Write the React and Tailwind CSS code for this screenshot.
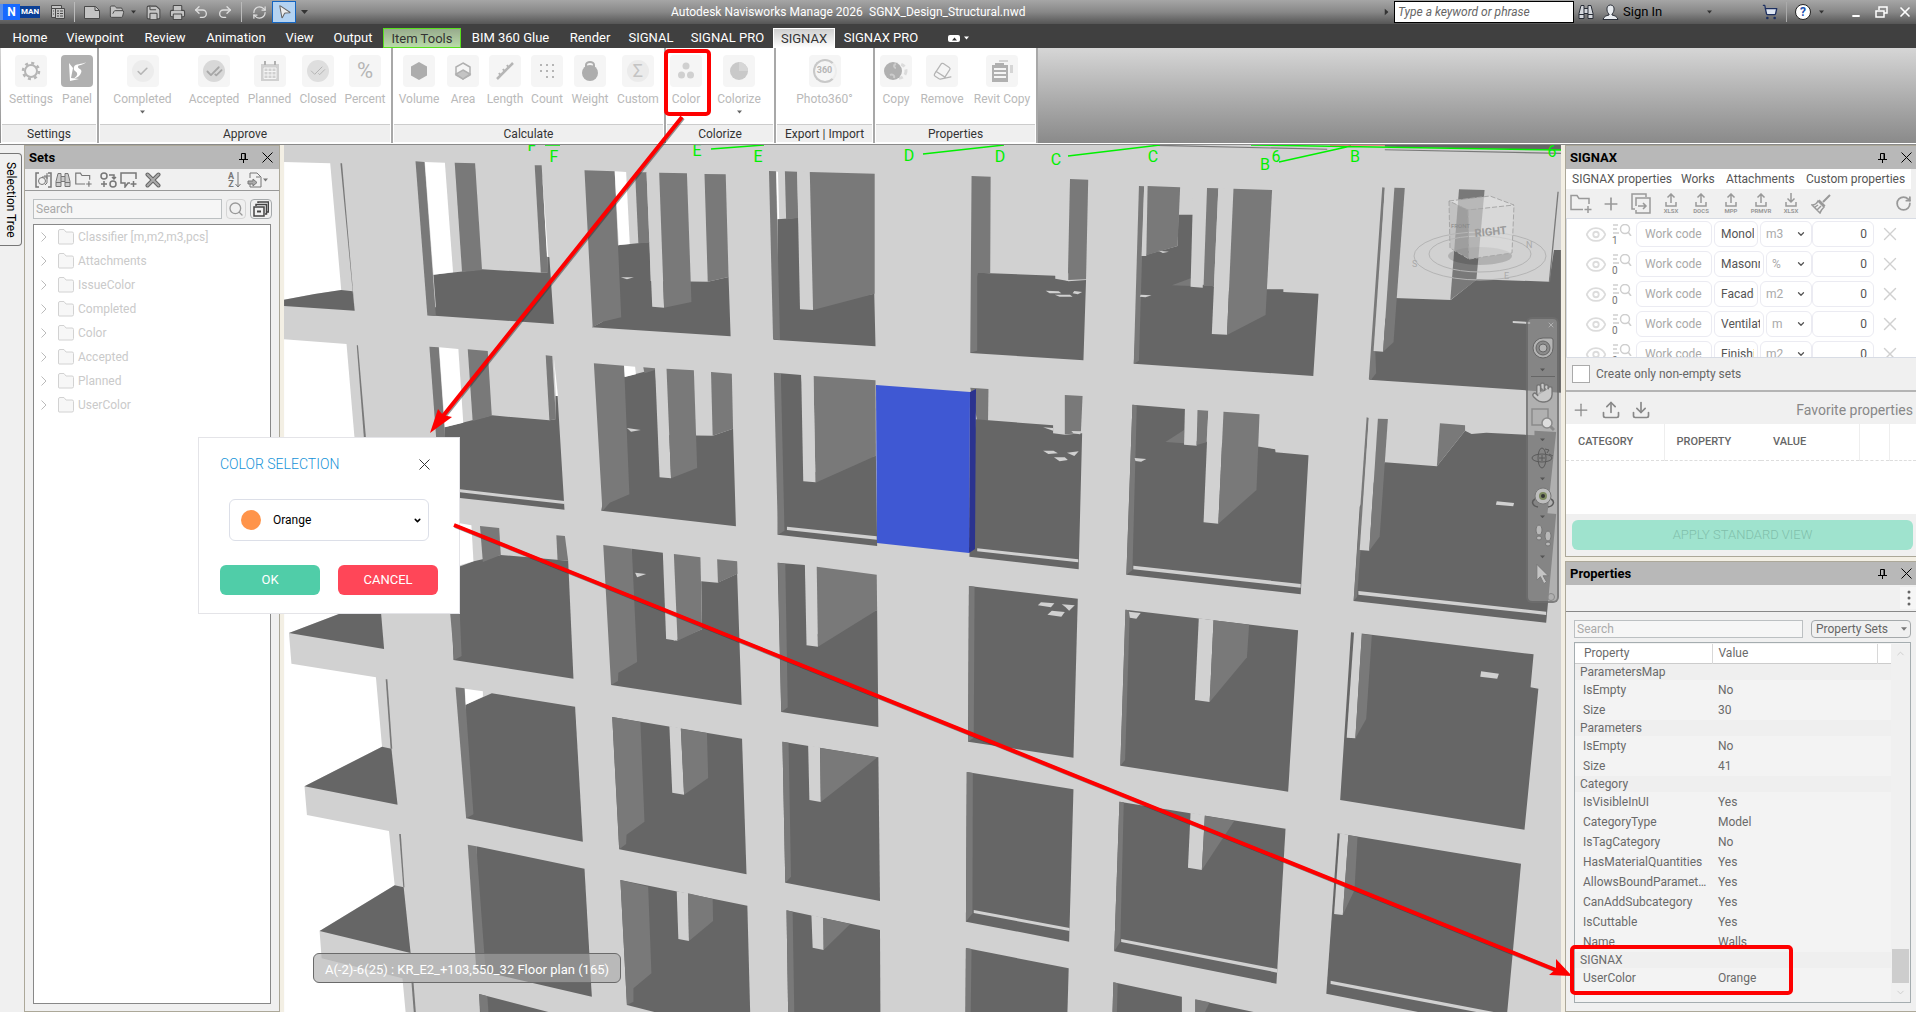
import { useState } from 'react';
import {
  Check, CheckCheck, ChevronDown, ChevronRight, ChevronUp, Download, Eraser, Eye, FolderOpen, Hand, Minus,
  MousePointer2, Plus, Printer, Redo2, RefreshCw, RotateCw, Save, Search, ShoppingCart, Undo2, Upload, X,
} from 'lucide-react';

const TABS = [
  { name: 'Home', cls: 'w-[52px]' },
  { name: 'Viewpoint', cls: 'w-[78px]' },
  { name: 'Review', cls: 'w-[62px]' },
  { name: 'Animation', cls: 'w-[80px]' },
  { name: 'View', cls: 'w-[47px]' },
  { name: 'Output', cls: 'w-[60px]' },
  { name: 'Item Tools', cls: 'w-[78px] border border-[#57e01c] bg-linear-to-b from-[#98ab8d] to-[#b9dba8] text-[#333]' },
  { name: 'BIM 360 Glue', cls: 'w-[99px]' },
  { name: 'Render', cls: 'w-[60px]' },
  { name: 'SIGNAL', cls: 'w-[62px]' },
  { name: 'SIGNAL PRO', cls: 'w-[91px]' },
  { name: 'SIGNAX', cls: 'w-[62px] border border-b-0 border-white bg-linear-to-b from-[#cfcfcf] to-white text-[#333]' },
  { name: 'SIGNAX PRO', cls: 'w-[92px]' },
];

const SETS = ['Classifier [m,m2,m3,pcs]', 'Attachments', 'IssueColor', 'Completed', 'Color', 'Accepted', 'Planned', 'UserColor'];

const WORKS = [
  { count: 1, name: 'Monolith', unit: 'm3' },
  { count: 0, name: 'Masonry', unit: '%' },
  { count: 0, name: 'Facade', unit: 'm2' },
  { count: 0, name: 'Ventilation', unit: 'm' },
  { count: 0, name: 'Finishing', unit: 'm2' },
];

const PROPERTIES = [
  { group: 'ParametersMap', rows: [['IsEmpty', 'No'], ['Size', '30']] },
  { group: 'Parameters', rows: [['IsEmpty', 'No'], ['Size', '41']] },
  {
    group: 'Category',
    rows: [
      ['IsVisibleInUI', 'Yes'], ['CategoryType', 'Model'], ['IsTagCategory', 'No'], ['HasMaterialQuantities', 'Yes'],
      ['AllowsBoundParameters', 'Yes'], ['CanAddSubcategory', 'Yes'], ['IsCuttable', 'Yes'], ['Name', 'Walls'],
    ],
  },
  { group: 'SIGNAX', rows: [['UserColor', 'Orange']] },
];

// Surface tones: w = sky, l = lit face, m = side face, d = floor
const TONES = { w: '#ffffff', l: '#d1d1d1', m: '#797979', d: '#666666' };

// The facade is drawn in four tiles, every tile on its own grid
const TILES = [
  {
    transform: 'translate(280 140) scale(0.40816 0.33333)',
    faces: [
      ['w', '10,66 123,70 150,450 85,462 10,479'],
      ['m', '148,70 152,70 183,512 178,452'],
      ['d', '10,479 85,462 150,450 178,454 183,512 10,498'],
      ['w', '10,598 163,612 183,900 10,900'],
      ['m', '188,616 191,616 211,900 206,900'],
      ['d', '376,404 495,388 640,398 655,398 655,350 660,352 671,552 361,526 382,500'],
      ['m', '332,64 354,66 382,528 361,526'],
      ['w', '355,66 404,68 424,397 376,404'],
      ['m', '428,68 478,70 495,390 446,396'],
      ['m', '624,76 641,76 657,398 639,398'],
      ['w', '642,90 657,350 654,350'],
      ['d', '829,316 905,306 908,423 1048,425 1099,411 1104,589 764,562 790,545 800,400'],
      ['m', '746,91 820,94 836,532 790,545 766,562'],
      ['w', '820,94 848,96 857,312 830,315'],
      ['m', '870,97 898,97 905,308 878,310'],
      ['l', '898,98 929,98 941,503 912,500'],
      ['m', '929,98 997,100 1008,486 941,503'],
      ['m', '1040,102 1092,103 1099,411 1048,425'],
      ['l', '835,412 867,412 850,418'],
      ['d', '1219,238 1270,233 1290,500 1456,461 1459,619 1208,599 1219,590'],
      ['m', '1198,93 1215,94 1225,600 1208,598'],
      ['w', '1216,95 1220,95 1223,237 1219,237'],
      ['m', '1237,94 1267,95 1270,234 1240,238'],
      ['l', '1267,95 1298,96 1306,510 1274,508'],
      ['m', '1298,96 1457,101 1457,461 1306,510'],
      ['d', '403,862 519,826 660,841 675,838 675,768 680,768 697,1109 441,1074 405,1070'],
      ['m', '366,620 389,622 405,900 383,900'],
      ['w', '390,622 437,627 449,848 404,862'],
      ['m', '460,628 509,633 519,827 472,843'],
      ['m', '651,646 667,648 676,838 660,841'],
      ['w', '671,655 681,768 676,768'],
      ['l', '441,1048 697,1083 697,1092 441,1057'],
      ['d', '843,711 919,687 932,885 1060,887 1110,866 1117,1159 787,1112 820,900'],
      ['m', '769,670 843,677 856,1063 808,1088 790,1113'],
      ['w', '843,677 870,680 872,703 845,711'],
      ['m', '890,682 919,685 919,690 893,700'],
      ['l', '919,684 947,686 958,1015 930,1012'],
      ['m', '947,686 1014,691 1022,984 958,1015'],
      ['m', '1056,696 1107,701 1110,866 1060,887'],
      ['l', '850,864 884,870 860,875'],
      ['d', '1226,700 1277,705 1300,1000 1460,947 1463,1218 1219,1184'],
      ['m', '1210,698 1227,700 1236,1172 1220,1184'],
      ['m', '1307,708 1459,721 1460,947 1312,1028'],
      ['l', '1277,705 1307,708 1312,1027 1282,1024'],
      ['l', '1242,1160 1462,1189 1462,1199 1242,1170'],
    ],
  },
  {
    transform: 'translate(280 570) scale(0.40816 0.33333)',
    faces: [
      ['w', '10,120 170,120 22,189 28,281 235,322 250,530 60,649 66,735 267,783 281,946 97,1083 102,1165 300,1225 308,1330 10,1330'],
      ['d', '22,189 170,120 247,120 255,237'],
      ['d', '60,649 250,530 273,536 288,704'],
      ['d', '97,1083 281,946 303,952 320,1149'],
      ['m', '259,328 263,328 275,536 271,536'],
      ['m', '292,792 296,792 305,952 302,952'],
      ['m', '322,1235 327,1235 333,1330 328,1330'],
      ['d', '417,0 475,-26 541,-45 706,-28 719,326 425,270'],
      ['w', '441,-140 469,-134 474,-26 441,-14'],
      ['m', '490,-132 537,-126 541,-45 497,-24'],
      ['m', '677,-104 698,-102 706,-28 680,-30'],
      ['m', '412,60 438,60 445,258 427,270'],
      ['d', '455,404 519,370 723,410 742,815 456,745'],
      ['m', '430,352 452,355 474,733 456,745'],
      ['w', '453,356 497,364 497,380 455,404'],
      ['d', '481,829 746,896 764,1280 483,1200'],
      ['m', '460,824 481,829 503,1190 481,1200'],
      ['d', '488,1272 670,1330 490,1330'],
      ['m', '488,1272 508,1279 511,1330 491,1330'],
      ['d', '862,-64 938,-52 965,212 1034,178 1032,34 1072,38 1120,11 1131,405 811,345 829,250'],
      ['m', '792,-75 862,-64 875,276 829,308 828,333 811,345'],
      ['l', '938,-52 965,-48 974,212 946,207'],
      ['m', '965,-48 1030,-38 1034,178 974,212'],
      ['m', '1071,-32 1120,-26 1121,11 1073,38'],
      ['l', '870,8 897,12 875,22'],
      ['d', '814,441 1132,506 1143,913 831,838'],
      ['m', '814,441 883,456 893,755 849,794 848,822 831,838'],
      ['l', '954,468 982,474 990,674 961,668'],
      ['m', '982,476 1046,489 1049,624 990,674'],
      ['d', '834,930 1145,1007 1152,1330 930,1330 850,1305'],
      ['m', '834,930 902,950 910,1210 866,1255 866,1295 850,1305'],
      ['l', '972,964 1000,970 1002,1113 976,1107'],
      ['m', '1000,970 1060,987 1061,1053 1002,1113'],
      ['d', '1219,-22 1286,-15 1300,200 1463,120 1466,471 1228,426'],
      ['m', '1220,-22 1238,-18 1244,412 1228,426'],
      ['l', '1286,-15 1315,-10 1318,230 1290,226'],
      ['m', '1315,-10 1462,14 1463,120 1318,230'],
      ['d', '1231,515 1466,562 1470,993 1238,938'],
      ['m', '1231,515 1246,518 1252,920 1238,938'],
      ['l', '1294,526 1323,532 1325,696 1297,690'],
      ['m', '1323,534 1464,562 1325,696'],
      ['d', '1241,1021 1470,1080 1471,1330 1245,1330'],
      ['m', '1241,1021 1256,1025 1260,1330 1245,1330'],
      ['l', '1302,1035 1331,1043 1332,1140 1305,1133'],
      ['m', '1331,1044 1397,1062 1332,1140'],
    ],
  },
  {
    transform: 'translate(900 140) scale(0.43367 0.33333)',
    faces: [
      ['d', '1118,14 1524,14 1524,30 1118,20'],
      ['m', '590,14 985,26 985,29 590,18'],
      ['m', '1118,28 1524,38 1524,42 1118,31'],
      ['d', '178,398 358,407 388,424 429,420 423,661 162,639 170,620'],
      ['m', '165,108 209,110 208,399 178,399 178,632 162,638'],
      ['m', '392,117 434,119 429,418 387,420'],
      ['l', '358,400 388,400 388,423 358,416'],
      ['l', '336,452 366,454 372,460 345,460'],
      ['l', '402,453 420,456 410,463 398,460'],
      ['l', '357,464 392,464 398,470 368,470'],
      ['d', '552,350 640,318 642,224 676,224 672,430 720,438 754,446 884,448 884,456 965,461 953,708 539,671'],
      ['m', '551,138 563,139 551,662 539,671'],
      ['l', '563,139 571,139 568,348 557,348'],
      ['m', '571,138 646,142 640,318 568,346'],
      ['m', '627,436 672,414 672,438'],
      ['l', '676,150 708,150 698,443 670,440'],
      ['m', '708,144 734,145 724,438 700,438'],
      ['l', '734,146 769,147 754,584 719,582'],
      ['m', '769,146 858,150 843,525 754,585'],
      ['l', '555,464 580,466 566,472 553,470'],
      ['l', '596,332 620,335 606,339'],
      ['d', '1140,474 1270,480 1330,418 1497,425 1508,330 1524,330 1524,758 1082,719 1098,600'],
      ['m', '1112,142 1118,143 1096,634 1098,700 1086,719 1081,718'],
      ['l', '1118,143 1140,144 1114,635 1092,633'],
      ['m', '1140,143 1164,144 1138,607 1114,635'],
      ['m', '1289,148 1348,150 1329,420 1269,480'],
      ['m', '1516,155 1519,155 1499,425 1496,425'],
      ['l', '1413,543 1453,546 1453,552 1413,549'],
      ['m', '162,743 204,747 203,842 178,842'],
      ['d', '174,838 353,856 353,880 380,884 420,880 412,1288 160,1250'],
      ['m', '380,765 421,768 417,880 380,883'],
      ['l', '178,1225 411,1258 411,1267 178,1234'],
      ['l', '330,932 354,932 364,940 342,942'],
      ['l', '385,938 412,934 402,948'],
      ['l', '355,952 380,952 387,960 368,964'],
      ['l', '330,862 353,864 353,872'],
      ['l', '395,873 419,874 415,883 400,880'],
      ['d', '536,794 658,807 665,900 829,920 865,928 866,937 942,946 924,1363 522,1304'],
      ['m', '536,794 546,796 536,1290 522,1304'],
      ['m', '612,906 655,870 655,910'],
      ['l', '657,806 686,809 684,917 655,914'],
      ['m', '686,810 711,812 707,907 684,915'],
      ['l', '711,812 746,815 734,1151 700,1147'],
      ['m', '746,815 829,823 822,1050 734,1151'],
      ['l', '541,954 568,957 556,965 543,963'],
      ['l', '538,1277 924,1332 924,1343 538,1288'],
      ['d', '1118,967 1238,979 1303,872 1318,882 1352,878 1463,886 1463,872 1513,876 1493,1120 1513,1122 1490,1448 1046,1383 1060,1100'],
      ['m', '1076,832 1081,834 1062,1230 1054,1370 1046,1383'],
      ['l', '1081,834 1102,836 1082,1232 1060,1230'],
      ['m', '1102,836 1125,837 1106,1190 1082,1232'],
      ['m', '1245,850 1303,856 1303,872 1238,979'],
      ['l', '1376,1084 1416,1089 1414,1099 1374,1094'],
      ['l', '1057,1353 1490,1415 1490,1425 1057,1364'],
    ],
  },
  {
    transform: 'translate(900 570) scale(0.43367 0.33333)',
    faces: [
      ['d', '159,48 410,86 400,563 157,515'],
      ['m', '159,48 172,50 170,503 157,515'],
      ['l', '325,97 356,100 348,112 318,106'],
      ['l', '373,103 403,106 390,122 382,112'],
      ['l', '350,122 380,126 372,140 340,134'],
      ['d', '154,606 400,658 390,1115 152,1055'],
      ['m', '154,606 168,609 167,1030 152,1055'],
      ['l', '170,1020 391,1074 391,1083 170,1029'],
      ['d', '152,1134 389,1195 386,1330 151,1330'],
      ['m', '152,1134 165,1137 163,1330 151,1330'],
      ['d', '520,119 918,181 895,665 508,587'],
      ['m', '520,119 530,121 519,570 508,587'],
      ['l', '689,145 723,151 714,396 680,390'],
      ['m', '723,151 805,164 800,262 714,396'],
      ['l', '528,125 555,129 545,146 530,143'],
      ['d', '506,695 889,776 868,1241 494,1144'],
      ['m', '506,695 516,697 508,1115 494,1144'],
      ['l', '670,728 703,735 696,900 664,893'],
      ['m', '703,737 771,752 696,900'],
      ['l', '510,1107 870,1197 870,1208 510,1116'],
      ['d', '492,1237 830,1330 490,1330'],
      ['m', '492,1237 502,1240 500,1330 490,1330'],
      ['l', '650,1275 681,1284 681,1330 650,1330'],
      ['m', '681,1288 714,1297 702,1330 681,1330'],
      ['d', '1040,187 1461,253 1454,352 1472,356 1440,779 1015,690'],
      ['l', '1047,186 1065,190 1050,505 1030,503'],
      ['m', '1065,192 1088,196 1075,447 1050,505'],
      ['l', '1340,304 1381,311 1377,326 1338,320'],
      ['d', '1009,790 1432,881 1400,1330 1210,1330 983,1271'],
      ['l', '1014,790 1034,794 1021,1035 1001,1032'],
      ['m', '1034,796 1055,800 1048,960 1021,1035'],
      ['l', '993,1232 1385,1330 1345,1330 993,1242'],
    ],
  },
];

const AXIS_LABELS = [
  ['F', 532, 151], ['F', 554, 162], ['E', 697, 156], ['E', 758, 162], ['D', 909, 161], ['D', 1000, 162],
  ['C', 1056, 165], ['C', 1153, 162], ['B', 1265, 170], ['6', 1276, 162], ['B', 1355, 162], ['6', 1552, 157],
];

function Caret({ className = '' }) {
  return (
    <svg className={className} width="7" height="4" viewBox="0 0 7 4" fill="currentColor">
      <path d="M0 0h7L3.500 4z" />
    </svg>
  );
}

function BinocularsIcon({ fill = '#ddd' }) {
  return (
    <svg width="16" height="16" viewBox="0 0 16 16" fill={fill} stroke="currentColor">
      <path d="M3 1.500h3v3h4v-3h3l2 8v5h-5v-5H6v5H1v-5z" />
      <path d="M6 4.500v5M10 4.500v5M1 10.500h5M10 10.500h5" fill="none" />
    </svg>
  );
}

function FolderAddIcon({ width = 18 }) {
  return (
    <svg width={width} viewBox="0 0 22 20" fill="none" stroke="currentColor" strokeWidth="1.500">
      <path d="M13 15.500H1V1.500h6l2 3h10V10" />
      <path d="M18 12v7M14.500 15.500h7" />
    </svg>
  );
}

function IconButton({ label, className = '', children }) {
  return (
    <button type="button" aria-label={label} className={`flex shrink-0 items-center justify-center ${className}`}>
      {children}
    </button>
  );
}

function TitleBar() {
  return (
    <header className="flex h-6 shrink-0 items-center bg-linear-to-b from-[#a6a6a6] via-[#888] to-[#565656] text-[13px] text-white">
      <div className="flex w-[671px] shrink-0 items-center text-[#dedede]">
        <div className="flex h-4 w-[42px] items-center border-l-3 border-[#5b8fe8] text-white">
          <span className="flex h-4 w-[17px] items-center justify-center bg-[#1769ff] text-[12px] font-bold">N</span>
          <span className="flex h-3 w-5 items-center justify-center bg-[#0c3f95] text-[8px] font-bold">MAN</span>
        </div>
        <IconButton label="Application" className="w-8">
          <svg width="14" height="14" viewBox="0 0 14 14" fill="#c4c4c4" stroke="#4a4a4a"><path d="M.5.5h10v3H.5zM.5 3.500h4v9h-4zM4.500 3.500h9v10h-9z" /><path d="M6 6h2M9 6h3M6 8.500h2M9 8.500h3M6 11h2M9 11h3M2 6h1M2 9h1" /></svg>
        </IconButton>
        <span className="h-5 w-px bg-[#bbb]" />
        <IconButton label="New" className="w-[34px]">
          <svg width="16" height="13" viewBox="0 0 16 13" fill="#c4c4c4" stroke="#4a4a4a"><path d="M.5.5h11l4 4v8H.5z" /><path d="M11 .5v4h4.500" fill="none" /></svg>
        </IconButton>
        <IconButton label="Open" className="w-4"><FolderOpen size={16} stroke="#4a4a4a" fill="#c4c4c4" strokeWidth={1.500} /></IconButton>
        <span className="flex w-4 justify-center text-[#333]"><Caret className="w-[5px]" /></span>
        <IconButton label="Save" className="w-6"><Save size={17} stroke="#4a4a4a" fill="#c4c4c4" strokeWidth={1.500} /></IconButton>
        <IconButton label="Print" className="w-6"><Printer size={17} stroke="#4a4a4a" fill="#c4c4c4" strokeWidth={1.500} /></IconButton>
        <IconButton label="Undo" className="w-6"><Undo2 size={16} /></IconButton>
        <IconButton label="Redo" className="w-6"><Redo2 size={16} /></IconButton>
        <span className="ml-1 h-5 w-px bg-[#bbb]" />
        <IconButton label="Refresh" className="ml-1 w-[26px]"><RefreshCw size={15} /></IconButton>
        <IconButton label="Select" className="h-[22px] w-6 border border-[#1565c0] bg-[#b4d3f2]">
          <MousePointer2 size={16} stroke="#666" fill="#eee" strokeWidth={1.500} className="rotate-12" />
        </IconButton>
        <span className="flex w-4 justify-center text-[#333]"><Caret /></span>
      </div>
      <h1 className="w-[198px] shrink-0 text-[12px] whitespace-nowrap">Autodesk Navisworks Manage 2026</h1>
      <span className="flex-1 text-[12px]">SGNX_Design_Structural.nwd</span>
      <div className="flex shrink-0 items-center text-[#333]">
        <Caret className="mr-1 -rotate-90" />
        <input
          aria-label="Keyword"
          placeholder="Type a keyword or phrase"
          className="h-[22px] w-[180px] border border-black bg-white px-[3px] text-[12px] italic placeholder:text-[#666]"
        />
        <IconButton label="Find" className="w-6 text-[#2a2f38]"><BinocularsIcon fill="#d5d8dd" /></IconButton>
        <svg className="ml-1" width="17" height="17" viewBox="0 0 17 17" fill="#e8ebef" stroke="#2a2f38">
          <path d="M8.500 1C6 1 4.500 3 5 6c.2 2 1 3 2 4v1c-3 .6-5 1.500-6 4.500h15c-1-3-3-3.900-6-4.500v-1c1-1 1.800-2 2-4 .5-3-1-5-3.500-5z" />
        </svg>
        <button type="button" className="ml-1 w-[84px] text-left text-[13px] text-black">Sign In</button>
        <Caret className="w-[5px]" />
        <IconButton label="Store" className="ml-[50px] w-4"><ShoppingCart size={16} stroke="#1d2f5f" fill="#dfe6f2" /></IconButton>
        <span className="ml-2 h-5 w-px bg-[#aaa]" />
        <button type="button" aria-label="Help" className="ml-2 flex h-4 w-4 items-center justify-center rounded-full border border-[#222] bg-white text-[12px] font-bold text-[#2050b0]">?</button>
        <Caret className="ml-2 w-[5px]" />
        <IconButton label="Minimize" className="ml-5 h-5 w-6 pt-2 text-white"><Minus size={10} strokeWidth={5} /></IconButton>
        <IconButton label="Restore" className="w-[26px] text-white">
          <svg width="13" height="13" viewBox="0 0 13 13" fill="none" stroke="currentColor" strokeWidth="1.500"><path d="M4 4V1h8v6H9" /><path d="M1 5h8v6H1z" /></svg>
        </IconButton>
        <IconButton label="Close" className="w-[22px] text-white"><X size={16} strokeWidth={2.500} /></IconButton>
      </div>
    </header>
  );
}

function TabRow({ active, onSelect }) {
  return (
    <nav className="flex h-6 shrink-0 items-end bg-[#404040] pl-1 text-[13px] text-white">
      {TABS.map((tab) => (
        <button
          key={tab.name}
          type="button"
          aria-current={active === tab.name}
          onClick={() => onSelect(tab.name)}
          className={`h-5 shrink-0 text-center leading-5 whitespace-nowrap ${tab.cls}`}
        >
          {tab.name}
        </button>
      ))}
      <button type="button" aria-label="Collapse ribbon" className="mb-[6px] ml-[21px] flex h-[7px] w-[12px] items-center justify-center rounded-xs bg-white text-[#333]">
        <Caret className="w-[5px] rotate-180" />
      </button>
      <span className="mb-2 ml-1"><Caret className="w-[5px]" /></span>
    </nav>
  );
}

function Tool({ label, className, dark, caret, children }) {
  return (
    <button type="button" className={`flex shrink-0 flex-col items-center text-[12px] text-[#b9b9b9] ${className}`}>
      <span className={`flex h-8 w-8 items-center justify-center rounded-sm ${dark ? 'bg-[#b0b0b0] text-white' : 'bg-[#f5f5f5] text-[#b5b5b5]'}`}>
        {children}
      </span>
      <span className="mt-1 leading-4 whitespace-nowrap">{label}</span>
      {caret && <Caret className="mt-[3px] w-[5px] text-[#666]" />}
    </button>
  );
}

function ToolGroup({ title, className, bodyClass = '', children }) {
  return (
    <section className={`flex shrink-0 flex-col border-r-2 border-[#a8a8a8] bg-white ${className}`}>
      <div className={`flex flex-1 items-start pt-[7px] ${bodyClass}`}>{children}</div>
      <h2 className="mx-px mb-px h-[18px] border-t border-[#ccc] bg-[#efefef] text-center text-[12px] leading-[18px] text-[#333]">{title}</h2>
    </section>
  );
}

function Ribbon() {
  return (
    <div className="flex h-24 shrink-0 border-b border-white bg-linear-to-b from-[#d6d6d6] to-[#8a8a8a] pl-px">
      <ToolGroup title="Settings" className="w-[98px]" bodyClass="gap-px pl-[6px]">
        <Tool label="Settings" className="w-12">
          <svg width="20" height="20" viewBox="0 0 20 20" fill="none" stroke="currentColor">
            <circle cx="10" cy="10" r="6" strokeWidth="2" />
            <circle cx="10" cy="10" r="8" strokeWidth="2.500" strokeDasharray="3 3.280" />
          </svg>
        </Tool>
        <Tool label="Panel" className="w-[42px]" dark>
          <svg width="22" height="22" viewBox="0 0 22 22" fill="currentColor">
            <path d="M3 3l4 5-2 10 8 1-9 2z" />
            <path d="M20 2c-3 4-8 2-8 5 0 2 5 2 3 6-1 3-4 5-8 6 3-2 5-4 4-6s-4-2-3-6c1-4 8-2 12-5z" />
          </svg>
        </Tool>
      </ToolGroup>
      <ToolGroup title="Approve" className="w-[294px]" bodyClass="gap-[7px] pl-[13px]">
        <Tool label="Completed" className="mr-2 w-[61px]" caret>
          <span className="flex h-[22px] w-[22px] items-center justify-center rounded-full bg-[#ececec]"><Check size={13} strokeWidth={3} /></span>
        </Tool>
        <Tool label="Accepted" className="w-[52px]">
          <span className="flex h-[22px] w-[22px] items-center justify-center rounded-full bg-[#d8d8d8] text-[#a6a6a6]"><CheckCheck size={17} strokeWidth={2.500} /></span>
        </Tool>
        <Tool label="Planned" className="w-[45px]">
          <svg width="20" height="20" viewBox="0 0 20 20" fill="#d0d0d0">
            <path d="M1 3h18v17H1z" /><path d="M4 0h2v4H4zM14 0h2v4h-2z" fill="#b0b0b0" />
            <path d="M4 7h12M4 10.500h12M4 14h12M4 17.500h12M4 7v10.500M8 7v10.500M12 7v10.500M16 7v10.500" stroke="#f5f5f5" fill="none" />
          </svg>
        </Tool>
        <Tool label="Closed" className="w-[38px]">
          <span className="flex h-[22px] w-[22px] items-center justify-center rounded-full bg-[#dedede]"><CheckCheck size={16} strokeWidth={1.500} /></span>
        </Tool>
        <Tool label="Percent" className="w-[42px]"><span className="text-[22px] leading-none">%</span></Tool>
      </ToolGroup>
      <ToolGroup title="Calculate" className="w-[273px]" bodyClass="gap-[7px] pl-[5px]">
        <Tool label="Volume" className="w-[42px]">
          <svg width="18" height="18" viewBox="0 0 18 18" fill="#adadad"><path d="M9 0l8 4.500v9L9 18l-8-4.500v-9z" /></svg>
        </Tool>
        <Tool label="Area" className="w-8">
          <svg width="18" height="18" viewBox="0 0 18 18" fill="none" stroke="#b0b0b0" strokeWidth="1.500"><path d="M9 1l7 4v8l-7 4-7-4V5z" /><path d="M9 8l7 4-7 5-7-5z" fill="#c4c4c4" /></svg>
        </Tool>
        <Tool label="Length" className="w-[38px]"><svg width="20" height="20" viewBox="0 0 20 20" fill="none" stroke="currentColor" strokeWidth="2.500"><path d="M2 18L18 2" /><path d="M4 12l2 3M8 8l2 3M12 4l2 3" strokeWidth="2" /></svg></Tool>
        <Tool label="Count" className="w-8">
          <svg width="16" height="16" viewBox="0 0 16 16" stroke="currentColor" strokeWidth="2" strokeDasharray="2 4"><path d="M1 2h14M1 8h14M7 14h8" /></svg>
        </Tool>
        <Tool label="Weight" className="w-[40px]">
          <svg width="18" height="20" viewBox="0 0 18 20" fill="#adadad"><circle cx="9" cy="12" r="8" /><path d="M5 6V4a4 3 0 018 0v2" fill="none" stroke="#adadad" strokeWidth="2" /></svg>
        </Tool>
        <Tool label="Custom" className="w-[42px]"><span className="flex h-[22px] w-[22px] items-center justify-center rounded-full bg-[#ebebeb] text-[18px] leading-none text-[#c4c4c4]">Σ</span></Tool>
      </ToolGroup>
      <ToolGroup title="Colorize" className="w-[110px]" bodyClass="gap-[14px] pl-1">
        <Tool label="Color" className="w-8">
          <svg width="18" height="18" viewBox="0 0 18 18" fill="#d0d0d0"><circle cx="9" cy="4" r="3.500" /><circle cx="4.500" cy="13" r="3.500" /><circle cx="13.500" cy="13" r="3.500" /></svg>
        </Tool>
        <Tool label="Colorize" className="w-[46px]" caret>
          <svg width="18" height="18" viewBox="0 0 18 18"><circle cx="9" cy="9" r="9" fill="#c9c9c9" /><path d="M9 0v9h9A9 9 0 009 0z" fill="#d6d6d6" /></svg>
        </Tool>
      </ToolGroup>
      <ToolGroup title="Export | Import" className="w-[99px]" bodyClass="justify-center">
        <Tool label="Photo360°" className="w-[60px]">
          <span className="flex h-6 w-6 items-center justify-center rounded-full border-2 border-[#c8c8c8] border-r-[#ededed] text-[9px] font-bold">360</span>
        </Tool>
      </ToolGroup>
      <ToolGroup title="Properties" className="w-[163px]" bodyClass="gap-[7px] pl-[5px]">
        <Tool label="Copy" className="w-8">
          <svg width="24" height="20" viewBox="0 0 24 20"><circle cx="15" cy="10" r="7" fill="none" stroke="#dcdcdc" strokeWidth="3" strokeDasharray="4 3" /><circle cx="9" cy="10" r="9" fill="#b0b0b0" /><path d="M12 3c-3 1-2 4 0 4M6 14c2-1 5 0 4 3" fill="none" stroke="#ccc" strokeWidth="2" /></svg>
        </Tool>
        <Tool label="Remove" className="w-[46px]"><Eraser size={20} strokeWidth={1.500} className="-rotate-12" /></Tool>
        <Tool label="Revit Copy" className="w-[60px]">
          <svg width="22" height="22" viewBox="0 0 22 22" fill="#b0b0b0"><path d="M1 5h16v17H1z" /><path d="M4 3h9v2H4z" /><path d="M8 0h9v2H8zM19 5h3v8h-3z" fill="#d5d5d5" /><path d="M3 9h12M3 13h12M3 17h12" stroke="#f5f5f5" strokeWidth="2" /></svg>
        </Tool>
      </ToolGroup>
    </div>
  );
}

function PanelTitle({ children }) {
  return (
    <div className="flex h-[23px] shrink-0 items-center bg-[#b8b8b8] px-1">
      <h2 className="flex-1 text-[13px] font-bold text-black">{children}</h2>
      <IconButton label={`Pin ${children}`} className="mr-[14px]">
        <svg width="9" height="10" viewBox="0 0 9 10" fill="none" stroke="#000"><path d="M2.500 6V.5h4V6M0 6.500h9M4.500 6v4" /><path d="M6 1v5" /></svg>
      </IconButton>
      <IconButton label={`Close ${children}`}>
        <svg width="11" height="11" viewBox="0 0 11 11" stroke="#000"><path d="M.5.5l10 10M10.500.5l-10 10" /></svg>
      </IconButton>
    </div>
  );
}

function FolderIcon() {
  return (
    <svg width="16" height="16" viewBox="0 0 16 16" fill="#f7f7f7" stroke="#d2d2d2">
      <path d="M.5 2q0-1.500 1.500-1.500h4l2 2.500h6q1.500 0 1.500 1.500v9q0 1.500-1.500 1.500h-12Q.5 15.500.5 14z" />
    </svg>
  );
}

function SetsPanel() {
  return (
    <aside className="flex w-[256px] shrink-0 flex-col border border-[#aca899] bg-[#f0f0f0] pr-[2px]">
      <div className="-mr-[2px] bg-[#b8b8b8] pr-[2px]"><PanelTitle>Sets</PanelTitle></div>
      <div className="-mr-[2px] flex h-[22px] shrink-0 items-center border-b border-[#999] pr-[11px] pl-2 text-[#777]">
        <IconButton label="Save selection" className="w-5">
          <svg width="17" height="16" viewBox="0 0 17 16" fill="none" stroke="currentColor"><path d="M4 1H1v14h3M13 1h3v14h-3" strokeWidth="1.500" /><circle cx="7" cy="9" r="3.500" /><path d="M7 5h5v6l-2 2" /><path d="M12 1v6M9 4h6" /></svg>
        </IconButton>
        <IconButton label="Save search" className="w-5"><BinocularsIcon fill="#ccc" /></IconButton>
        <IconButton label="New folder" className="w-5"><FolderAddIcon width={17} /></IconButton>
        <IconButton label="Duplicate" className="ml-[5px] w-5">
          <svg width="17" height="16" viewBox="0 0 17 16" fill="none" stroke="currentColor" strokeWidth="1.500"><circle cx="4" cy="4" r="3" /><circle cx="13" cy="12" r="3" /><path d="M9 3h5v4M12 5l2 2 2-2M1 12h6M4 9v6" /></svg>
        </IconButton>
        <IconButton label="Add comment" className="w-5">
          <svg width="17" height="16" viewBox="0 0 17 16" fill="none" stroke="currentColor" strokeWidth="1.500"><path d="M10 11H8l-3 4v-4H1V1h15v6" /><path d="M13.500 9v6M10.500 12h6" /></svg>
        </IconButton>
        <IconButton label="Delete" className="ml-[5px] w-5">
          <svg width="16" height="16" viewBox="0 0 16 16" fill="none" strokeLinecap="round"><path d="M2.500 2.500l11 11M13.500 2.500l-11 11" stroke="#666" strokeWidth="4" /><path d="M2.500 2.500l11 11M13.500 2.500l-11 11" stroke="#aaa" strokeWidth="2" /></svg>
        </IconButton>
        <span className="flex-1" />
        <button type="button" aria-label="Sort" className="flex w-4 items-center text-[9px] leading-[8px] font-bold">
          <span className="flex w-2 flex-col"><span>A</span><span>Z</span></span>
          <svg width="6" height="16" viewBox="0 0 6 16" fill="none" stroke="currentColor"><path d="M3 0v15M.5 12L3 15l2.500-3" /></svg>
        </button>
        <IconButton label="Import or export" className="ml-1">
          <svg width="15" height="16" viewBox="0 0 15 16" fill="none" stroke="currentColor"><path d="M3 6V1h7l4 4v10H3v-3" /><path d="M1 9h5V7l4 3.500L6 14v-2H1z" fill="#aaa" /><path d="M13 5H9" /></svg>
          <Caret className="ml-px w-[5px]" />
        </IconButton>
      </div>
      <div className="mt-2 flex h-5 shrink-0 items-center px-2 pr-[5px]">
        <input aria-label="Search sets" placeholder="Search" className="h-5 min-w-0 flex-1 border border-[#bcc0c2] bg-[#f6f6f6] px-[2px] text-[12px] placeholder:text-[#aaa]" />
        <IconButton label="Search" className="ml-1 h-5 w-5 rounded-sm border border-[#d5d5d5] text-[#999]"><Search size={16} /></IconButton>
        <IconButton label="Collapse all" className="ml-1 h-5 w-[22px] rounded-sm border border-[#a5a9ab] text-[#444]">
          <svg width="16" height="16" viewBox="0 0 16 16" fill="none" stroke="currentColor"><path d="M1 6h10v9H1zM3 5V3.500h10.500V13H12M5 2V1h10.500v10H14" strokeWidth="1.500" /><path d="M4 10.500h4" strokeWidth="2" /></svg>
        </IconButton>
      </div>
      <ul className="mt-[5px] mr-[6px] mb-[7px] ml-2 flex-1 border border-[#888] bg-white text-[12px] text-[#cacaca]">
        {SETS.map((name) => (
          <li key={name} className="flex h-6 items-center">
            <svg width="6" height="10" viewBox="0 0 6 10" fill="none" stroke="#bbb" className="mr-[11px] ml-[7px]"><path d="M.5.5L5 5 .5 9.500" /></svg>
            <FolderIcon />
            <span className="ml-1">{name}</span>
          </li>
        ))}
      </ul>
    </aside>
  );
}

function ViewCube() {
  return (
    <g>
      <ellipse cx="1480" cy="256" rx="66" ry="24" fill="none" stroke="#b4b4b4" />
      <ellipse cx="1480" cy="254" rx="51" ry="18" fill="none" stroke="#b4b4b4" />
      <ellipse cx="1480" cy="256" rx="32" ry="9" fill="#000" opacity=".15" />
      <path d="M1449 201l41-5 24 9-46 5z" fill="#e2e2e2" opacity=".6" />
      <path d="M1449 201l19 9 1 49-19-11z" fill="#b8b8b8" opacity=".6" />
      <path d="M1468 210l46-5-2 48-43 6z" fill="#dcdcdc" opacity=".6" />
      <path d="M1449 201l41-5 24 9-46 5zl1 47 19 11-1-49M1469 259l43-6 2-48" fill="none" stroke="#a8a8a8" strokeDasharray="5 2" />
      <text x="1475" y="237" fontSize="11" fontWeight="bold" fill="#9a9a9a" transform="rotate(-6 1476 237)">RIGHT</text>
      <text x="1451" y="228" fontSize="6" fill="#888">FRONT</text>
      <text x="1412" y="267" fontSize="9" fill="#aaa">S</text>
      <text x="1504" y="279" fontSize="9" fill="#aaa">E</text>
      <text x="1526" y="248" fontSize="9" fill="#aaa">N</text>
    </g>
  );
}

function NavigationBar() {
  return (
    <div className="absolute top-[172px] right-[2px] flex h-[286px] w-[33px] flex-col items-center rounded-md border-2 border-[#5c5c5c]/60 bg-[#999]/60 text-[#c4c4c4]">
      <IconButton label="Close navigation bar" className="ml-4 h-3"><X size={8} /></IconButton>
      <IconButton label="Steering wheel" className="mt-[6px]">
        <svg width="22" height="22" viewBox="0 0 22 22" fill="#b4b4b4" stroke="#666"><path d="M1 11A10 10 0 0111 1h8q2 0 2 2v8a10 10 0 01-20 0z" /><circle cx="11" cy="11" r="7" fill="#8a8a8a" /><circle cx="11" cy="11" r="4" fill="#b4b4b4" /></svg>
      </IconButton>
      <Caret className="mt-[9px] w-[5px] text-[#555]" />
      <span className="mt-1 h-px w-6 bg-[#666]" />
      <IconButton label="Pan" className="mt-1"><Hand size={23} stroke="#777" fill="#c9c9c9" strokeWidth={1.500} /></IconButton>
      <IconButton label="Zoom window" className="mt-1">
        <svg width="24" height="23" viewBox="0 0 24 23" fill="none" stroke="#8a8a8a" strokeWidth="1.500"><path d="M1 1h16v16H1z" /><path d="M19 18l4 4" strokeWidth="3" /><circle cx="16" cy="15" r="5" fill="#ddd" /></svg>
      </IconButton>
      <Caret className="mt-[7px] w-[5px] text-[#555]" />
      <IconButton label="Orbit" className="mt-[6px]">
        <svg width="23" height="23" viewBox="0 0 23 23" fill="none" stroke="#5a5a5a"><ellipse cx="11" cy="11" rx="10" ry="4" /><ellipse cx="11" cy="11" rx="4" ry="10" /><path d="M11 8v6M8 11h6M14 2l4 1-2 3M18 7l4 2" /></svg>
      </IconButton>
      <Caret className="mt-[7px] w-[5px] text-[#555]" />
      <IconButton label="Look" className="mt-[6px]">
        <svg width="24" height="22" viewBox="0 0 24 22"><path d="M4 12c-4 2-3 7 3 8M20 12c4 2 3 7-3 8" fill="none" stroke="#5a5a5a" strokeWidth="1.500" /><circle cx="12" cy="9" r="8" fill="#bdbdbd" stroke="#777" /><circle cx="12" cy="9" r="4" fill="#7d8a60" /><circle cx="12" cy="9" r="2" fill="#333" /></svg>
      </IconButton>
      <Caret className="mt-[6px] w-[5px] text-[#555]" />
      <IconButton label="Walk" className="mt-[6px]">
        <svg width="18" height="24" viewBox="0 0 18 24" fill="#b8b8b8" stroke="#777"><ellipse cx="5" cy="6" rx="3" ry="5" /><ellipse cx="5" cy="14" rx="2.500" ry="2" /><ellipse cx="14" cy="12" rx="3" ry="5" /><ellipse cx="14" cy="20" rx="2.500" ry="2" /></svg>
      </IconButton>
      <Caret className="mt-[7px] w-[5px] text-[#555]" />
      <IconButton label="Select" className="mt-1">
        <svg width="14" height="22" viewBox="0 0 16 24" fill="#c4c4c4" stroke="#777"><path d="M1 1v18l4-4 4 8 3-2-4-7h6z" /></svg>
      </IconButton>
      <span className="mt-2 ml-4 h-2 w-2 shrink-0 rounded-full border border-[#888]" />
    </div>
  );
}

function ModelView() {
  return (
    <main className="relative min-w-0 flex-1 overflow-hidden border-x-4 border-[#f3efe4] bg-[#d1d1d1]">
      <svg className="absolute inset-0 h-full w-full" viewBox="284 145 1277 867" preserveAspectRatio="xMinYMin slice">
        {TILES.map((tile) => (
          <g key={tile.transform} transform={tile.transform}>
            {tile.faces.map(([tone, points]) => (
              <polygon key={points} points={points} fill={TONES[tone]} />
            ))}
          </g>
        ))}
        <polygon points="876,385 970,392 969,553 877,543" fill="#3f58d3" />
        <polygon points="970,392 976,389 975,549 969,553" fill="#2b338f" />
        <g stroke="#00f000" strokeWidth="1.500" fill="none">
          <path d="M711 149l53-4M923 154l81-9M1068 156l92-11M1279 162l72-16M1251 145l310 5M545 145h15" />
        </g>
        <path d="M1330 145h55" stroke="#ff4040" />
        <g fill="#00f000" fontSize="16" textAnchor="middle">
          {AXIS_LABELS.map(([text, x, y]) => <text key={x} x={x} y={y}>{text}</text>)}
        </g>
        <ViewCube />
      </svg>
      <NavigationBar />
      <div className="absolute bottom-[29px] left-[29px] flex h-[30px] w-[308px] items-center justify-center rounded-md border border-[#6a6a6a] bg-[#a8a8a8]/60 pt-[3px] text-[13px] whitespace-nowrap text-white">
        A(-2)-6(25) : KR_E2_+103,550_32 Floor plan (165)
      </div>
    </main>
  );
}

function FileAction({ label, up }) {
  return (
    <button type="button" className="flex w-[30px] shrink-0 flex-col items-center text-[6px] leading-[7px] font-bold">
      <svg width="12" height="14" viewBox="0 0 12 14" fill="none" stroke="currentColor" strokeWidth="1.500">
        {up ? <path d="M6 10V1M2.500 4.500L6 1l3.500 3.500" /> : <path d="M6 0v9M2.500 5.500L6 9l3.500-3.500" />}
        <path d="M1 9v4h10V9" />
      </svg>
      {label}
    </button>
  );
}

function WorkRow({ work }) {
  const short = work.unit.length === 1;
  return (
    <li className="flex h-[30px] items-center pl-[18px]">
      <IconButton label={`Show ${work.name}`} className="w-[22px] text-[#dcdcdc]"><Eye size={23} strokeWidth={2} /></IconButton>
      <span className="ml-[5px] flex w-5 flex-col text-[10px] leading-[9px] text-[#777]">
        <svg width="20" height="12" viewBox="0 0 20 12" fill="none" stroke="#cfcfcf" strokeWidth="1.500">
          <path d="M1 1h5M1 5h4M1 9h6" /><circle cx="13" cy="5" r="4.500" /><path d="M16 8l3 4" />
        </svg>
        <span>{work.count}</span>
      </span>
      <input aria-label="Work code" placeholder="Work code" className="ml-1 h-[26px] w-[76px] shrink-0 rounded-md border border-[#ebebf2] px-2 text-[12px] placeholder:text-[#aaa]" />
      <input
        aria-label="Work name"
        defaultValue={work.name}
        className={`ml-[2px] h-[26px] shrink-0 rounded-md border border-[#ebebf2] pr-[3px] pl-[6px] text-[12px] text-[#555] ${short ? 'w-[50px]' : 'w-[44px]'}`}
      />
      <span className={`relative ml-[2px] shrink-0 ${short ? 'w-[46px]' : 'w-[52px]'}`}>
        <select aria-label="Unit" defaultValue={work.unit} className="block h-[26px] w-full appearance-none rounded-md border border-[#ebebf2] px-[5px] text-[12px] text-[#aaa]">
          <option>{work.unit}</option>
        </select>
        <ChevronDown size={10} strokeWidth={3} className="pointer-events-none absolute top-2 right-[6px] text-[#555]" />
      </span>
      <input aria-label="Amount" defaultValue="0" className="h-[26px] w-[62px] shrink-0 rounded-md border border-[#ebebf2] px-[6px] text-right text-[12px] text-[#555]" />
      <IconButton label={`Delete ${work.name}`} className="ml-[5px] text-[#d0d0d0]"><X size={22} strokeWidth={1.500} /></IconButton>
    </li>
  );
}

function SignaxPanel() {
  return (
    <section className="flex h-[412px] shrink-0 flex-col border border-r-0 border-[#aca899] bg-[#f0f0f0]">
      <PanelTitle>SIGNAX</PanelTitle>
      <nav className="mr-[5px] flex h-5 shrink-0 items-center bg-white pl-[6px] text-[12px] whitespace-nowrap text-[#555]">
        <button type="button" className="w-[109px] text-left">SIGNAX properties</button>
        <button type="button" className="w-[45px] text-left">Works</button>
        <button type="button" className="w-[80px] text-left">Attachments</button>
        <button type="button" className="text-left">Custom properties</button>
      </nav>
      <div className="flex h-[29px] shrink-0 items-center pr-1 text-[#999]">
        <IconButton label="Add folder" className="w-[30px]"><FolderAddIcon width={22} /></IconButton>
        <IconButton label="Add" className="w-[30px]"><Plus size={20} strokeWidth={2} /></IconButton>
        <IconButton label="Duplicate" className="w-[30px]">
          <svg width="20" height="22" viewBox="0 0 20 22" fill="none" stroke="currentColor" strokeWidth="1.500"><path d="M4 16H1V1h14v3" /><path d="M5 13V5h14v15H5v-3" /><path d="M7 13h8M12 10l3 3-3 3" /></svg>
        </IconButton>
        <FileAction label="XLSX" up />
        <FileAction label="DOCS" up />
        <FileAction label="MPP" up />
        <FileAction label="PRMVR" up />
        <FileAction label="XLSX" />
        <IconButton label="Clear" className="w-[30px]">
          <svg width="20" height="20" viewBox="0 0 20 20" fill="none" stroke="currentColor" strokeWidth="1.500"><path d="M19 1l-7 7" strokeWidth="2" /><path d="M8 6l6 6M7 7C6 9 4 11 1 11l8 8c1-3 3-5 4-6zM4 13l3-2M6 16l4-4" /></svg>
        </IconButton>
        <span className="flex-1" />
        <IconButton label="Reload"><RotateCw size={17} strokeWidth={2.500} /></IconButton>
      </div>
      <ul className="h-[140px] shrink-0 overflow-hidden border-y border-l border-[#d8dce4] bg-white">
        {WORKS.map((work) => <WorkRow key={work.name} work={work} />)}
      </ul>
      <label className="flex h-[34px] shrink-0 items-center border-b-2 border-[#b4b4b4] pl-[6px] text-[12px] text-[#666]">
        <input type="checkbox" className="mr-[6px] h-[18px] w-[18px] appearance-none border border-[#aaa] bg-white" />
        Create only non-empty sets
      </label>
      <div className="flex h-8 shrink-0 items-center pt-1 pr-[3px] text-[#888]">
        <IconButton label="Add property" className="w-[30px]"><Plus size={20} strokeWidth={1.500} /></IconButton>
        <IconButton label="Upload" className="w-[30px]"><Upload size={20} strokeWidth={2} /></IconButton>
        <IconButton label="Download" className="w-[30px]"><Download size={20} strokeWidth={2} /></IconButton>
        <h3 className="flex-1 text-right text-[14px]">Favorite properties</h3>
      </div>
      <div className="h-[90px] shrink-0 bg-white">
        <table className="w-full table-fixed text-left text-[11px] text-[#666]">
          <thead>
            <tr className="h-9 border-b border-dashed border-[#ddd]">
              <th className="w-[98px] border-r border-[#eee] pl-3 font-medium">CATEGORY</th>
              <th className="w-[97px] pl-3 font-medium">PROPERTY</th>
              <th className="w-[98px] border-r border-[#eee] pl-3 font-medium">VALUE</th>
              <th className="w-[30px] border-r border-[#eee]" />
              <th />
            </tr>
          </thead>
        </table>
      </div>
      <button type="button" className="mt-[6px] mr-[3px] ml-[6px] h-[30px] shrink-0 rounded-md bg-[#9fe3ce] text-[13px] font-light text-[#7fbfab]">
        APPLY STANDARD VIEW
      </button>
    </section>
  );
}

function PropertiesPanel() {
  return (
    <section className="mt-1 flex min-h-0 flex-1 flex-col border border-r-0 border-[#aca899] bg-[#f0f0f0]">
      <PanelTitle>Properties</PanelTitle>
      <div className="flex h-[27px] shrink-0 items-center justify-end border-b border-[#888]">
        <button type="button" aria-label="More" className="h-[22px] w-4 bg-[#f6f6f6] text-[#666]">
          <svg width="16" height="16" viewBox="0 0 16 16" fill="currentColor"><circle cx="9" cy="2" r="1.500" /><circle cx="9" cy="8" r="1.500" /><circle cx="9" cy="14" r="1.500" /></svg>
        </button>
      </div>
      <div className="mt-2 flex h-[18px] shrink-0 items-center gap-2 pr-[5px] pl-2">
        <input aria-label="Search properties" placeholder="Search" className="h-[18px] min-w-0 flex-1 border border-[#bcc0c2] bg-[#f6f6f6] px-[2px] text-[12px] placeholder:text-[#aaa]" />
        <span className="relative w-[100px]">
          <select aria-label="Property list" className="block h-[18px] w-full appearance-none rounded-sm border border-[#a5a9ab] pl-1 text-[12px] leading-4 text-[#666]">
            <option>Property Sets</option>
          </select>
          <Caret className="pointer-events-none absolute top-[7px] right-1 w-[6px] text-[#777]" />
        </span>
      </div>
      <div className="mt-1 mr-[5px] mb-2 ml-2 flex min-h-0 flex-1 overflow-hidden border border-[#a5adb0] bg-[#f3f3f3] pt-px">
        <div className="min-w-0 flex-1">
          <table className="w-full table-fixed text-left text-[12px] text-[#6a6a6a]">
            <thead>
              <tr className="h-[19px] border-b border-[#ccc] bg-white">
                <th className="w-[137px] border-r border-[#d8d8d8] pl-[9px] leading-4 font-normal">Property</th>
                <th className="border-r border-[#d8d8d8] pl-[6px] leading-4 font-normal">Value</th>
                <th className="w-[14px]" />
              </tr>
            </thead>
            {PROPERTIES.map(({ group, rows }) => (
              <tbody key={group}>
                <tr className="h-4 bg-[#efefef]">
                  <th colSpan="3" className="pl-[5px] leading-4 font-normal">{group}</th>
                </tr>
                {rows.map(([name, value]) => (
                  <tr key={name} className="h-5">
                    <td className="truncate pr-[4px] pl-2 leading-5">{name}</td>
                    <td className="pl-[6px] leading-5">{value}</td>
                    <td />
                  </tr>
                ))}
              </tbody>
            ))}
          </table>
        </div>
        <div className="flex w-[19px] shrink-0 flex-col items-center bg-[#f0f0f0] py-1 text-[#ccc]">
          <ChevronUp size={11} />
          <span className="flex-1" />
          <span className="mb-1 h-[34px] w-[17px] bg-[#cdcdcd]" />
          <ChevronDown size={11} />
        </div>
      </div>
    </section>
  );
}

function ColorDialog({ onClose }) {
  return (
    <div role="dialog" aria-labelledby="color-title" className="absolute top-[437px] left-[198px] w-[262px] border border-[#e4e4e8] bg-white px-[21px] pb-[18px]">
      <div className="flex h-[52px] items-center justify-between pr-2">
        <h2 id="color-title" className="text-[14px] font-light text-[#1593d8]">COLOR SELECTION</h2>
        <IconButton label="Close dialog">
          <svg width="11" height="11" viewBox="0 0 11 11" stroke="#333"><path d="M.5.5l10 10M10.500.5l-10 10" /></svg>
        </IconButton>
      </div>
      <div className="relative mt-[9px] mr-[9px] ml-[9px]">
        <select aria-label="Color" className="block h-[42px] w-full appearance-none rounded-md border border-[#dcdfe8] bg-white pl-[43px] text-[12px] text-black">
          <option>Orange</option>
        </select>
        <span className="pointer-events-none absolute top-[11px] left-[12px] h-5 w-5 rounded-full bg-[#ff944a]" />
        <ChevronDown size={9} strokeWidth={4} className="pointer-events-none absolute top-[17px] right-[7px]" />
      </div>
      <div className="mt-6 flex justify-between text-[13px] text-white">
        <button type="button" onClick={onClose} className="h-[30px] w-[100px] rounded-md bg-[#50cda8]">OK</button>
        <button type="button" onClick={onClose} className="h-[30px] w-[100px] rounded-md bg-[#ff4658]">CANCEL</button>
      </div>
    </div>
  );
}

function Callouts() {
  return (
    <svg className="pointer-events-none absolute inset-0 h-full w-full" viewBox="0 0 1916 1012" preserveAspectRatio="none">
      <g stroke="#333" strokeWidth="4" opacity=".5" transform="translate(1 1)">
        <path d="M682 117L443 416M454 525L1556 970" />
      </g>
      <g fill="none" stroke="#fe0000" strokeWidth="4">
        <rect x="666" y="51" width="43" height="63" rx="3" />
        <rect x="1572" y="947" width="219" height="46" rx="3" />
        <path d="M682 117L443 416M454 525L1556 970" />
      </g>
      <path d="M430 433l8-24 5 6 9 2zM1572 976l-23-1 7-6 0-10z" fill="#fe0000" />
    </svg>
  );
}

export default function App() {
  const [activeTab, setActiveTab] = useState('SIGNAX');
  const [dialogOpen, setDialogOpen] = useState(true);

  return (
    <div className="relative flex h-screen flex-col overflow-hidden bg-[#f0f0f0] font-['Roboto','Noto_Sans',sans-serif]">
      <TitleBar />
      <TabRow active={activeTab} onSelect={setActiveTab} />
      <Ribbon />
      <div className="flex min-h-0 flex-1 border-t border-[#8a8a8a]">
        <div className="w-6 shrink-0 pt-2">
          <button type="button" className="h-[93px] w-[22px] rounded-r-sm border border-l-0 border-[#777] text-[12px] leading-4 whitespace-nowrap [writing-mode:vertical-rl]">
            Selection Tree
          </button>
        </div>
        <SetsPanel />
        <ModelView />
        <div className="flex w-[351px] shrink-0 flex-col bg-[#f3efe4]">
          <SignaxPanel />
          <PropertiesPanel />
        </div>
      </div>
      {dialogOpen && <ColorDialog onClose={() => setDialogOpen(false)} />}
      <Callouts />
    </div>
  );
}
